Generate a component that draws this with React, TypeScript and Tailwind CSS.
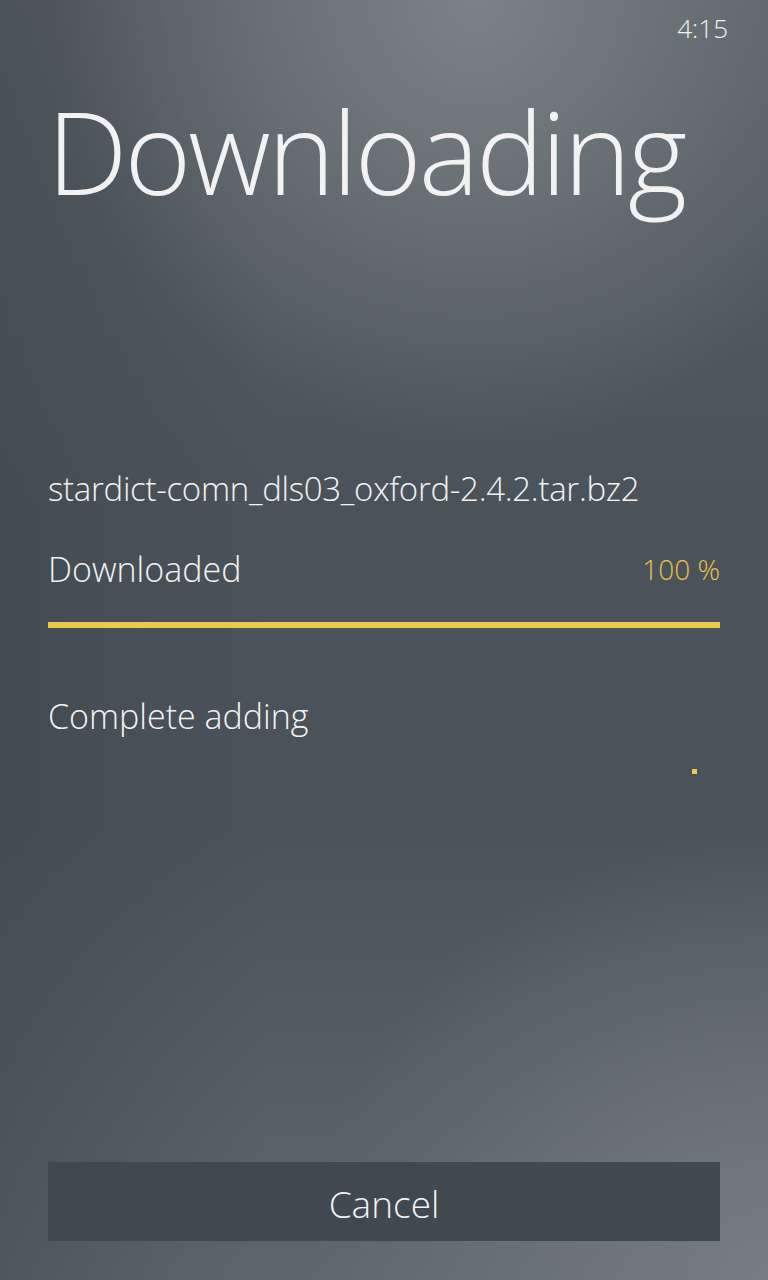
export default function App() {
  return (
    <div
      className="relative w-[768px] h-[1280px] overflow-hidden text-[#f2f2f2] bg-[#4a535a] bg-[radial-gradient(ellipse_55%_35%_at_62%_0%,#7a8285_0%,rgba(122,130,133,0)_100%),radial-gradient(ellipse_60%_35%_at_100%_100%,#767d81_0%,rgba(118,125,129,0)_100%),linear-gradient(90deg,rgba(60,67,75,0.45)_0%,rgba(60,67,75,0)_35%),linear-gradient(180deg,#575f65_0%,#4a535a_40%,#4a535a_65%,#5d676d_100%)]"
      style={{ fontFamily: '"Open Sans", "Noto Sans", sans-serif' }}
    >
      <div className="flex justify-end pt-[12px] pr-[40px] text-[26px] leading-[32px] font-light">
        4:15
      </div>

      <h1 className="pl-[47px] mt-[37px] text-[114px] leading-[140px] font-light tracking-[-3px]">
        Downloading
      </h1>

      <div className="px-[48px] mt-[248px]">
        <p className="text-[33px] leading-[40px] font-light tracking-[-0.3px]">
          stardict-comn_dls03_oxford-2.4.2.tar.bz2
        </p>

        <div className="flex items-center justify-between mt-[40px]">
          <span className="text-[34px] leading-[40px] font-light">Downloaded</span>
          <span className="text-[28px] leading-[40px] font-light text-[#e9c24b]">100 %</span>
        </div>

        <div className="mt-[33px] h-[6px] bg-[#efc74a]" />

        <p className="mt-[68px] text-[34px] leading-[40px] font-light">Complete adding</p>

        <div className="flex justify-end pr-[23px] mt-[33px]">
          <div className="w-[5px] h-[5px] bg-[#efc74a]" />
        </div>
      </div>

      <button className="absolute left-[48px] top-[1162px] w-[672px] h-[79px] pt-[4px] bg-[#414950] text-[37px] font-light text-[#f2f2f2]">
        Cancel
      </button>
    </div>
  );
}
